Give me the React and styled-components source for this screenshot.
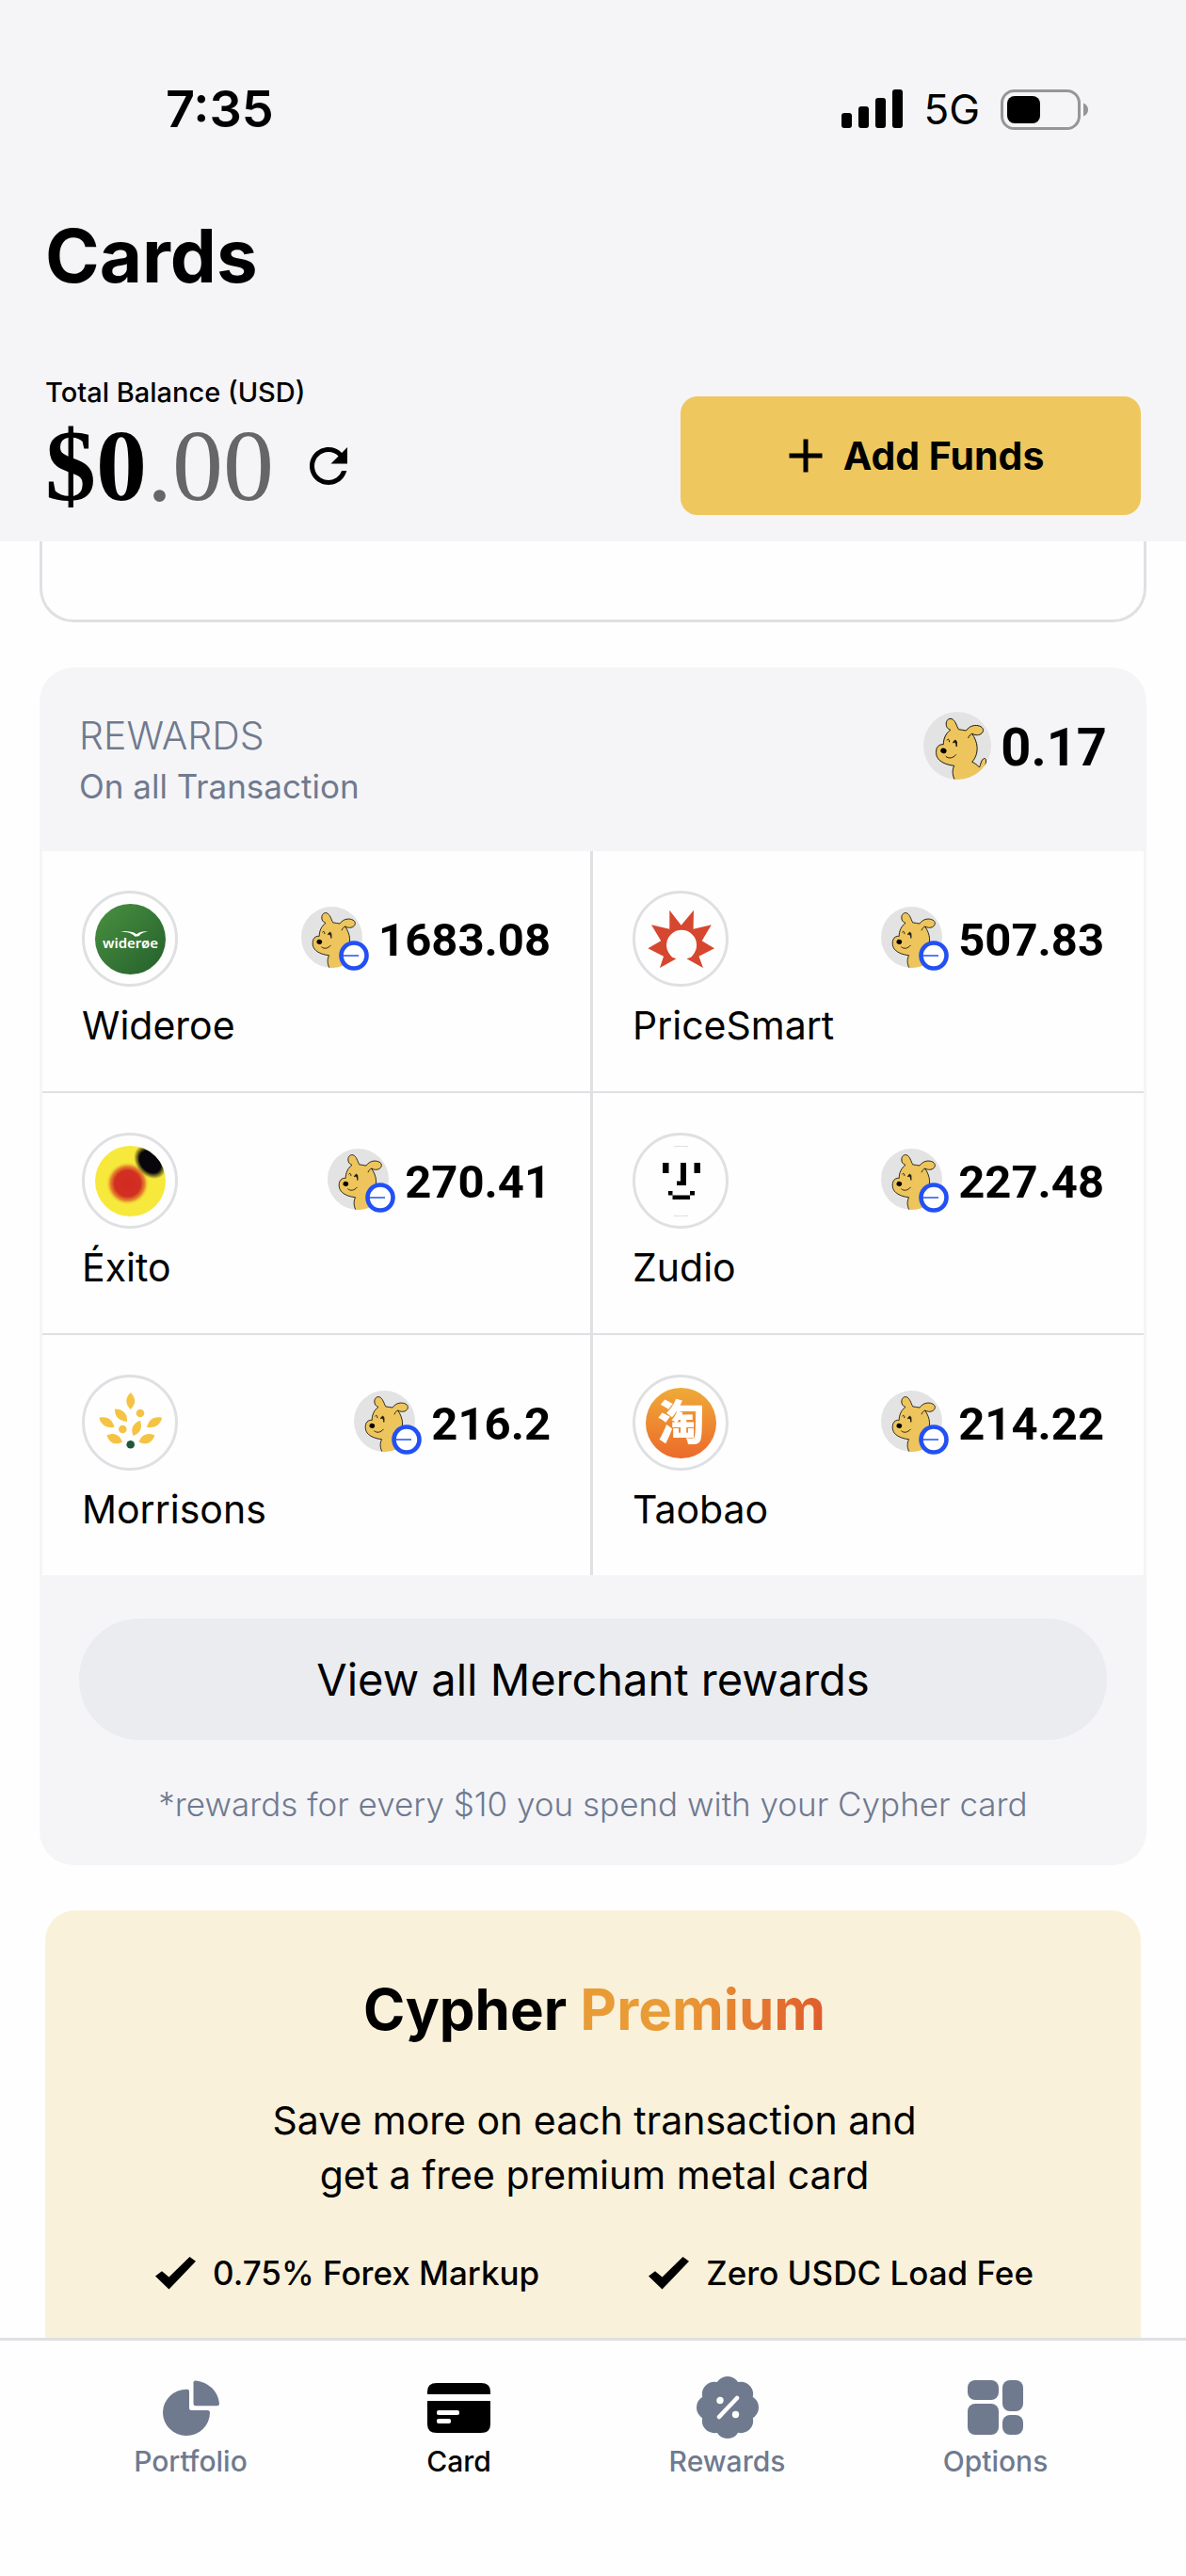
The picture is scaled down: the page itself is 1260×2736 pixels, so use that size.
import React from 'react';
import styled, { createGlobalStyle } from 'styled-components';
import { MdAdd, MdRefresh } from 'react-icons/md';

const DogIcon = ({ size }) => (
    <svg width={size} height={size} viewBox="0 0 72 72" aria-hidden="true">
        <defs>
            <clipPath id="dogClip">
                <circle cx="36" cy="36" r="36" />
            </clipPath>
        </defs>
        <g clipPath="url(#dogClip)">
            <rect width="72" height="72" fill="#e3e3e3" />
            <g fill="#edc55c" stroke="#1c1a14" strokeWidth="1" strokeLinejoin="round" strokeLinecap="round">
                <path d="M33.5 73C30.5 67 30.5 62 32.7 57.3C26 56.6 20.5 54.5 17 51.3C13.4 48 12.8 42.5 14.3 38.6C15.6 35.6 18.3 34.4 21.3 34.7C21.2 28.5 24 22.6 28.8 19.3C25.6 18.4 23.8 15.4 24.2 12C24.7 8.6 27.2 6.6 30 7.5C34 8.8 35 14.5 37.4 18.7C40 19.2 42.6 19.3 45.3 20C47.6 17 50.6 14.8 54.5 14.5C59.5 14.1 63.6 16.4 63.5 19.6C63.4 23 59.8 25 56 24.7C54.3 24.6 53 23.8 51.8 23.4C54.6 27.5 56.8 32.5 57.1 37.5C57.4 44 55.4 49 51.8 53.3C54.6 54.6 57.4 56.4 59.5 59C61 56 61 52 63.6 50C66.5 48 67 52 66.2 55.5L66 73Z" />
                <path d="M51.8 23.4C49.8 24 48.4 25.4 47.8 27.6" fill="none" />
                <path d="M24 47.5C27 50.2 31.5 49.3 34.6 45.6" fill="none" />
                <path d="M25.2 30C26 28.4 27.5 28.8 27.6 31.8" fill="none" />
                <path d="M31.8 32.6C33 28.6 36.4 29 35.2 37C35 33.6 33.8 31.6 31.8 32.6Z" fill="#1c1a14" />
            </g>
            <ellipse cx="21.4" cy="41.4" rx="3.2" ry="2.8" fill="#000" transform="rotate(20 21.4 41.4)" />
        </g>
    </svg>
);

const BaseBadge = () => (
    <BadgeSvg width="32" height="32" viewBox="0 0 32 32" aria-hidden="true">
        <circle cx="16" cy="16" r="13.5" fill="#fff" stroke="#2250f4" strokeWidth="4.6" />
        <path d="M3 16H21" stroke="#2250f4" strokeWidth="1.5" />
    </BadgeSvg>
);

const WideroeLogo = () => (
    <svg width="75" height="75" viewBox="0 0 75 75" aria-hidden="true">
        <defs>
            <linearGradient id="wideroe" x1="0" y1="0" x2="1" y2="1">
                <stop offset="0" stopColor="#4a9142" />
                <stop offset="1" stopColor="#245f2b" />
            </linearGradient>
        </defs>
        <circle cx="37.5" cy="37.5" r="37.5" fill="url(#wideroe)" />
        <path d="M27 29.2C33 28.8 40 29 44 32.2C47 29.8 51 28.9 56 29.4C51 30 48.5 31.5 46.5 34.3L42.5 34.8C39.5 30.8 34 30 27 29.2Z" fill="#fff" />
        <text x="37.5" y="47" textAnchor="middle" fontFamily="'Noto Sans', sans-serif" fontWeight="600" fontSize="15" fill="#fff">widerøe</text>
    </svg>
);

const PriceSmartLogo = () => (
    <svg width="75" height="75" viewBox="0 0 75 75" aria-hidden="true">
        <path
            d="M15 68L19 55.7L2.4 47.3L16.2 39.3L6 22.3L25.3 26.7L25.3 6.7L37.7 22.7L51 6.7L50.6 26.7L69.8 22.3L59.7 39.3L73 47.3L56.5 55.7L61 68L43.5 58.2C47 57.6 49 56.4 50.2 54.2A16 16 0 1 0 26 54.2C27.4 56.4 29.4 57.6 32.5 58.2Z"
            fill="#d6472f"
        />
    </svg>
);

const ExitoLogo = () => (
    <svg width="75" height="75" viewBox="0 0 75 75" aria-hidden="true">
        <defs>
            <radialGradient id="exitoRed">
                <stop offset="0" stopColor="#d22b22" />
                <stop offset="0.6" stopColor="#d22f22" />
                <stop offset="0.8" stopColor="#e58a2c" />
                <stop offset="1" stopColor="#f6e63b" stopOpacity="0" />
            </radialGradient>
            <radialGradient id="exitoBlack">
                <stop offset="0.65" stopColor="#08060c" />
                <stop offset="1" stopColor="#08060c" stopOpacity="0" />
            </radialGradient>
            <clipPath id="exitoClip">
                <circle cx="37.5" cy="37.5" r="37.5" />
            </clipPath>
        </defs>
        <g clipPath="url(#exitoClip)">
            <rect width="75" height="75" fill="#f7e83c" />
            <circle cx="34.5" cy="40" r="23" fill="url(#exitoRed)" />
            <ellipse cx="58.5" cy="17" rx="20" ry="15" fill="url(#exitoBlack)" transform="rotate(50 58.5 17)" />
        </g>
    </svg>
);

const ZudioLogo = () => (
    <svg width="75" height="75" viewBox="0 0 75 75" aria-hidden="true">
        <path d="M18 18H24.5V29H18ZM51.5 18H58V29H51.5ZM37 18H43V42H33V37.5H37ZM24 48H28.5V52.5H47V48H52V52.5H47V57H28.5V52.5H24Z" />
        <path d="M30 0.8Q37.5 -0.2 45 0.8M30 74.2Q37.5 75.2 45 74.2" stroke="#dcdcdc" fill="none" />
    </svg>
);

const MorrisonsLogo = () => (
    <svg width="75" height="75" viewBox="0 0 75 75" aria-hidden="true">
        <g fill="#f5c344">
            <path d="M37.7 5C43.6 11 43.6 17 37.7 23C31.8 17 31.8 11 37.7 5Z" />
            <path d="M21 22.5C29.5 22.5 34.5 27 34 36C25.5 35 20.5 30.5 21 22.5Z" />
            <path d="M4.5 31.7C13 29.8 18.5 33.5 20.5 42C12 43 6 39.5 4.5 31.7Z" />
            <path d="M71 31.7C62.5 29.8 57 33.5 55 42C63.5 43 69.5 39.5 71 31.7Z" />
            <path d="M48 34.7C50.5 42 48.5 48 40.5 51C37.5 43.5 40 37.5 48 34.7Z" />
            <path d="M12.5 50.5C20 47 26 49.5 29 57.5C21.5 61.5 15 59 12.5 50.5Z" />
            <path d="M63.4 50.5C56 47 49.5 49.5 46.5 57.5C54 61.5 60.5 59 63.4 50.5Z" />
            <circle cx="48" cy="27" r="4.3" />
            <circle cx="29.3" cy="44" r="4.3" />
        </g>
        <circle cx="37.7" cy="60.3" r="4.3" fill="#20573f" />
    </svg>
);

const TaobaoLogo = () => (
    <svg width="75" height="75" viewBox="0 0 75 75" overflow="visible" aria-hidden="true">
        <defs>
            <linearGradient id="taobao" x1="0" y1="0" x2="0" y2="1">
                <stop offset="0" stopColor="#efaa38" />
                <stop offset="1" stopColor="#ec6a2a" />
            </linearGradient>
        </defs>
        <circle cx="37.5" cy="37.5" r="37.5" fill="url(#taobao)" />
        <text x="37.5" y="55" textAnchor="middle" fontFamily="'Noto Sans CJK SC', sans-serif" fontWeight="900" fontSize="50" fill="#fff">淘</text>
    </svg>
);

const SignalIcon = () => (
    <svg width="65" height="42" viewBox="0 0 65 42" aria-hidden="true">
        <rect x="0" y="25" width="11" height="16" rx="3" />
        <rect x="18" y="18" width="11" height="23" rx="3" />
        <rect x="36" y="9" width="11" height="32" rx="3" />
        <rect x="54" y="0" width="11" height="41" rx="3" />
    </svg>
);

const BatteryIcon = () => (
    <svg width="93" height="43" viewBox="0 0 93 43" aria-hidden="true">
        <rect x="1.5" y="1.5" width="82" height="40" rx="13" fill="none" stroke="#969698" strokeWidth="3" />
        <rect x="7" y="7" width="35" height="29" rx="8" />
        <path d="M88 14.5C91.5 16 93 18.5 93 21.5S91.5 27 88 28.5Z" fill="#969698" />
    </svg>
);

const CheckIcon = () => (
    <svg width="43" height="35" viewBox="0 0 43 35" aria-hidden="true">
        <path d="M0 20.5L7 15.3L14.5 21.5L36.5 0L43 4.8L14.5 34.5Z" />
    </svg>
);

const PortfolioIcon = () => (
    <svg width="60" height="60" viewBox="0 0 60 60" fill="currentColor" aria-hidden="true">
        <path d="M25.5 10.8Q28 10.5 28 13V30.5Q28 33 30.5 33H47.5Q50 33 50 35.5A25 24.6 0 1 1 25.5 10.8Z" />
        <path d="M32.5 3.5Q32.5 1.2 35 1.4A28 27 0 0 1 60 26Q60 28.3 57.6 28.3H35Q32.5 28.3 32.5 26Z" />
    </svg>
);

const CardIcon = () => (
    <svg width="67" height="53" viewBox="0 0 67 53" fill="currentColor" aria-hidden="true">
        <path d="M0 12V9Q0 0 10 0H57Q67 0 67 9V12Z" />
        <path d="M0 19H67V44Q67 53 57 53H10Q0 53 0 44Z" />
        <rect x="10" y="29" width="24" height="5" rx="2" fill="#fff" />
        <rect x="10" y="38" width="15" height="5" rx="2" fill="#fff" />
    </svg>
);

const RewardsIcon = () => (
    <svg width="66" height="66" viewBox="0 0 66 66" fill="currentColor" aria-hidden="true">
        <circle cx="33" cy="33" r="27" />
        {[0, 45, 90, 135, 180, 225, 270, 315].map((angle) => (
            <circle key={angle} cx="33" cy="13" r="13" transform={`rotate(${angle} 33 33)`} />
        ))}
        <path d="M24 43L43 23" stroke="#fff" strokeWidth="4.5" strokeLinecap="round" />
        <circle cx="25" cy="25.5" r="3.7" fill="#fff" />
        <circle cx="41.5" cy="40.5" r="3.7" fill="#fff" />
    </svg>
);

const OptionsIcon = () => (
    <svg width="59" height="58" viewBox="0 0 59 58" fill="currentColor" aria-hidden="true">
        <rect x="0" y="0" width="33" height="21" rx="8" />
        <rect x="0" y="25" width="33" height="33" rx="8" />
        <rect x="37" y="0" width="22" height="33" rx="8" />
        <rect x="37" y="37" width="22" height="21" rx="8" />
    </svg>
);

const merchants = [
    { name: 'Wideroe', reward: '1683.08', Logo: WideroeLogo },
    { name: 'PriceSmart', reward: '507.83', Logo: PriceSmartLogo },
    { name: 'Éxito', reward: '270.41', Logo: ExitoLogo },
    { name: 'Zudio', reward: '227.48', Logo: ZudioLogo },
    { name: 'Morrisons', reward: '216.2', Logo: MorrisonsLogo },
    { name: 'Taobao', reward: '214.22', Logo: TaobaoLogo },
];

const tabs = [
    { label: 'Portfolio', Icon: PortfolioIcon },
    { label: 'Card', Icon: CardIcon, active: true },
    { label: 'Rewards', Icon: RewardsIcon },
    { label: 'Options', Icon: OptionsIcon },
];

const App = () => (
    <Page>
        <GlobalStyle />
        <Header>
            <StatusBar>
                <Time>7:35</Time>
                <StatusIcons>
                    <SignalIcon />
                    <Network>5G</Network>
                    <BatteryIcon />
                </StatusIcons>
            </StatusBar>
            <Title>Cards</Title>
            <BalanceRow>
                <div>
                    <BalanceLabel>Total Balance (USD)</BalanceLabel>
                    <Balance>
                        <Amount>$0<span>.00</span></Amount>
                        <RefreshButton aria-label="Refresh balance"><MdRefresh /></RefreshButton>
                    </Balance>
                </div>
                <AddFunds><MdAdd />Add Funds</AddFunds>
            </BalanceRow>
        </Header>
        <Main>
            <PreviousCard />
            <Rewards>
                <RewardsHeader>
                    <div>
                        <RewardsTitle>REWARDS</RewardsTitle>
                        <RewardsSubtitle>On all Transaction</RewardsSubtitle>
                    </div>
                    <Reward>
                        <DogIcon size={72} />
                        <Points $large>0.17</Points>
                    </Reward>
                </RewardsHeader>
                <Grid>
                    {merchants.map(({ name, reward, Logo }) => (
                        <Merchant key={name}>
                            <MerchantTop>
                                <LogoRing><Logo /></LogoRing>
                                <Reward>
                                    <Token><DogIcon size={65} /><BaseBadge /></Token>
                                    <Points>{reward}</Points>
                                </Reward>
                            </MerchantTop>
                            <MerchantName>{name}</MerchantName>
                        </Merchant>
                    ))}
                </Grid>
                <RewardsFooter>
                    <ViewAll>View all Merchant rewards</ViewAll>
                    <Note>*rewards for every $10 you spend with your Cypher card</Note>
                </RewardsFooter>
            </Rewards>
            <Premium>
                <PremiumTitle>Cypher <span>Premium</span></PremiumTitle>
                <PremiumText>Save more on each transaction and<br />get a free premium metal card</PremiumText>
                <Features>
                    <Feature><CheckIcon />0.75% Forex Markup</Feature>
                    <Feature><CheckIcon />Zero USDC Load Fee</Feature>
                </Features>
            </Premium>
        </Main>
        <TabBar>
            {tabs.map(({ label, Icon, active }) => (
                <Tab href="#" key={label} $active={active}>
                    <TabIcon><Icon /></TabIcon>
                    {label}
                </Tab>
            ))}
        </TabBar>
    </Page>
);

const GlobalStyle = createGlobalStyle`
    * {
        box-sizing: border-box;
    }
    body {
        margin: 0;
        background: #fefefe;
        color: #000;
        font-family: Inter, 'Liberation Sans', sans-serif;
    }
    h1, h2, p, ul {
        margin: 0;
        padding: 0;
    }
    button {
        border: none;
        padding: 0;
        color: inherit;
        font-family: inherit;
        cursor: pointer;
    }
    svg {
        display: block;
        flex-shrink: 0;
    }
`

const Page = styled.div`
    min-height: 100vh;
    display: flex;
    flex-direction: column;
`

const Header = styled.header`
    background: #f5f5f7;
    padding: 86px 48px 28px;
`

const StatusBar = styled.div`
    display: flex;
    justify-content: space-between;
    align-items: center;
    height: 60px;
    padding: 0 56px 0 128px;
`

const Time = styled.div`
    font-size: 54px;
    font-weight: 600;
    line-height: 60px;
`

const StatusIcons = styled.div`
    display: flex;
    align-items: center;
    gap: 22px;
`

const Network = styled.div`
    font-size: 44px;
    line-height: 60px;
`

const Title = styled.h1`
    margin-top: 80px;
    font-size: 78px;
    font-weight: 700;
    line-height: 92px;
`

const BalanceRow = styled.div`
    display: flex;
    justify-content: space-between;
    align-items: flex-end;
    margin-top: 81px;
`

const BalanceLabel = styled.div`
    font-size: 29px;
    font-weight: 500;
    line-height: 36px;
`

const Balance = styled.div`
    display: flex;
    align-items: center;
    gap: 28px;
    margin-top: 8px;
`

const Amount = styled.div`
    font-family: 'Liberation Serif', serif;
    font-size: 108px;
    font-weight: 700;
    line-height: 104px;
    span {
        color: #666;
        font-weight: 400;
    }
`

const RefreshButton = styled.button`
    background: none;
    font-size: 60px;
`

const AddFunds = styled.button`
    width: 42%;
    height: 126px;
    border-radius: 18px;
    background: #eec75f;
    display: flex;
    align-items: center;
    justify-content: center;
    gap: 10px;
    font-size: 41px;
    font-weight: 700;
    svg {
        font-size: 60px;
    }
`

const Main = styled.main`
    flex: 1;
    display: flex;
    flex-direction: column;
    gap: 48px;
    padding: 0 42px;
`

const PreviousCard = styled.section`
    height: 86px;
    border: 3px solid #dfe0e3;
    border-top: none;
    border-radius: 0 0 36px 36px;
`

const Rewards = styled.section`
    border-radius: 36px;
    background: #f5f5f7;
`

const RewardsHeader = styled.div`
    display: flex;
    justify-content: space-between;
    align-items: flex-start;
    padding: 47px 42px 46px;
`

const RewardsTitle = styled.h2`
    color: #707a8f;
    font-size: 41px;
    font-weight: 300;
    line-height: 50px;
`

const RewardsSubtitle = styled.p`
    margin-top: 6px;
    color: #707a8f;
    font-size: 35px;
    line-height: 46px;
`

const Grid = styled.div`
    display: grid;
    grid-template-columns: 1fr 1fr;
    margin: 0 3px;
    background: #fefefe;
`

const Merchant = styled.div`
    padding: 42px 42px 45px;
    border-bottom: 2px solid #dfe0e3;
    &:nth-child(odd) {
        border-right: 3px solid #dfe0e3;
    }
    &:nth-last-child(-n + 2) {
        border-bottom: none;
    }
`

const MerchantTop = styled.div`
    display: flex;
    justify-content: space-between;
    align-items: center;
`

const LogoRing = styled.div`
    width: 102px;
    height: 102px;
    border: 3px solid #dfe0e3;
    border-radius: 50%;
    display: flex;
    align-items: center;
    justify-content: center;
`

const Reward = styled.div`
    display: flex;
    align-items: center;
    gap: 10px;
`

const Points = styled.span`
    padding-top: 4px;
    font-family: Roboto, sans-serif;
    font-size: ${(props) => (props.$large ? 56 : 49)}px;
    font-weight: 700;
    line-height: 68px;
`

const Token = styled.div`
    position: relative;
    width: 72px;
    height: 68px;
`

const BadgeSvg = styled.svg`
    position: absolute;
    right: 0;
    bottom: 0;
`

const MerchantName = styled.div`
    margin-top: 16px;
    font-size: 41px;
    line-height: 50px;
`

const RewardsFooter = styled.div`
    padding: 46px 42px 42px;
`

const ViewAll = styled.button`
    width: 100%;
    height: 129px;
    border-radius: 64px;
    background: #ebecef;
    font-size: 47px;
`

const Note = styled.p`
    margin-top: 45px;
    color: #707a8f;
    font-size: 35px;
    font-weight: 300;
    line-height: 46px;
    text-align: center;
`

const Premium = styled.section`
    flex: 1;
    margin: 0 6px;
    padding: 68px 114px 46px 117px;
    border-radius: 32px 32px 0 0;
    background: #faf1da;
`

const PremiumTitle = styled.h2`
    font-size: 60px;
    font-weight: 700;
    line-height: 74px;
    text-align: center;
    span {
        background: linear-gradient(100deg, #e99b36 40%, #e0592b);
        background-clip: text;
        color: transparent;
    }
`

const PremiumText = styled.p`
    margin-top: 52px;
    font-size: 41px;
    line-height: 58px;
    text-align: center;
`

const Features = styled.ul`
    display: flex;
    justify-content: space-between;
    margin-top: 52px;
    list-style: none;
`

const Feature = styled.li`
    display: flex;
    align-items: center;
    gap: 18px;
    font-size: 35px;
    font-weight: 500;
    line-height: 46px;
`

const TabBar = styled.nav`
    display: grid;
    grid-template-columns: repeat(4, 1fr);
    padding: 38px 60px 104px;
    border-top: 3px solid #dfe0e3;
    background: #fefefe;
`

const Tab = styled.a`
    display: flex;
    flex-direction: column;
    align-items: center;
    gap: 6px;
    color: ${(props) => (props.$active ? '#000' : '#707a8f')};
    font-size: 30px;
    font-weight: 500;
    line-height: 36px;
    text-decoration: none;
`

const TabIcon = styled.span`
    height: 66px;
    display: flex;
    align-items: center;
`

export default App;
